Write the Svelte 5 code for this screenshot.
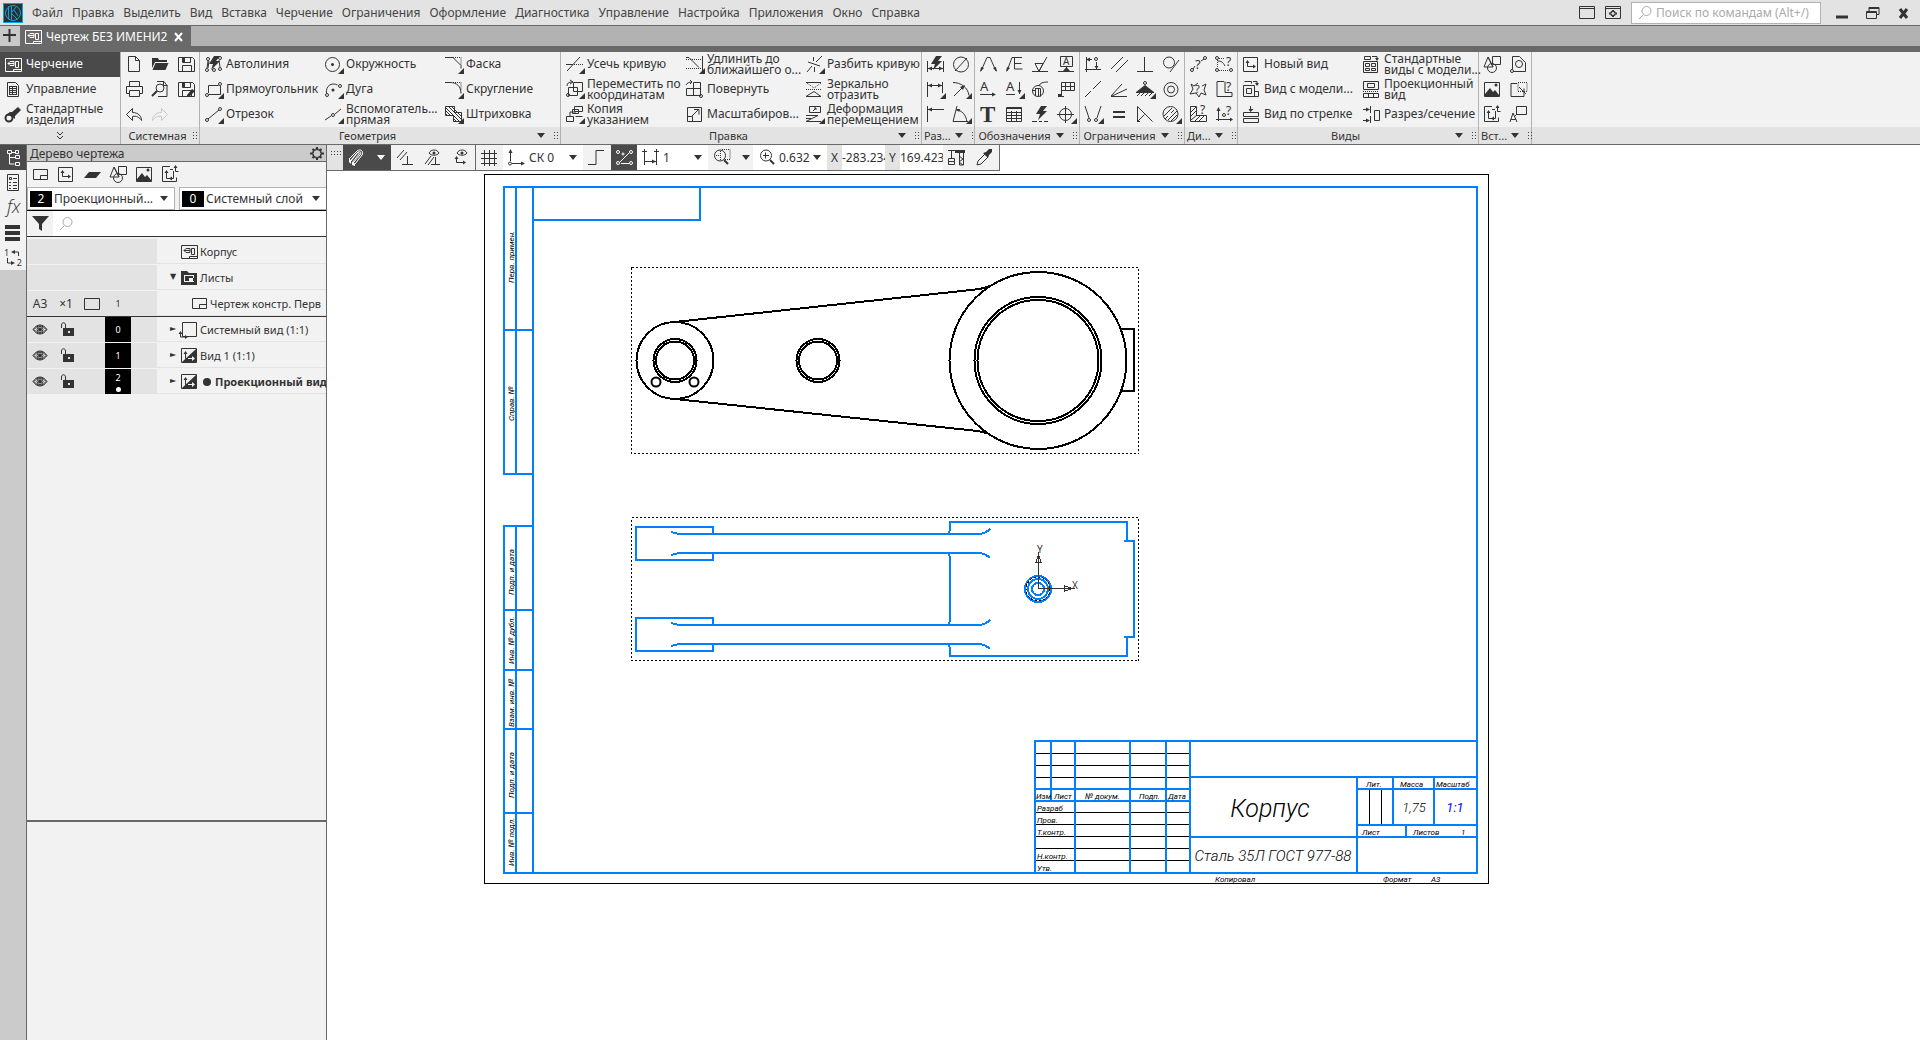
<script lang="ts">
  type Icon = {
    s?: string; // stroked
    f?: string; // filled
    d?: string; // dotted
    b?: string; // bold stroke
    t?: [number, number, number, string, string?];
    menu?: boolean;
  };

  const o = (x: number, y: number, r: number) =>
    `M${x - r} ${y}a${r} ${r} 0 1 0 ${2 * r} 0a${r} ${r} 0 1 0 ${-2 * r} 0`;

  const bolt = "M14 4h6l-4 5h4l-9 9 2-6h-4z";
  const save = "M5.5 5.5h14l2 2v12h-16zM9.5 5.5v5h8v-5M9.5 19.5v-6h9v6";

  const icons: Record<string, Icon> = {
    draft: {
      s: "M5.5 6.5h16v13h-16zM8 11.5l2-2h4v4h-4zM8 11.5h6M15.5 9.5h3v6h-3zM13.5 19.5v-2h8",
    },
    manage: { s: "M7.5 5.5h8l3 3v11h-11zM9.5 9.5h7M9.5 11.5h7M9.5 13.5h7M9.5 15.5h7M9.5 17.5h7M9.5 9v9M12.5 9v9M16.5 9v9" },
    screw: { b: o(9, 16, 3.5), f: "M6 13l4-3 2 0 6-5 3 3-6 6 0 3-4-3z" },
    file: { s: "M7.5 4.5h7l4 4v11h-11zM14.5 4.5v4h4" },
    folder: { f: "M5 6h6l1 2h8v2h-12l-3 6zM8.5 11h13l-3 7h-13z" },
    save: { s: save, f: "M9 5h3v5h-3z" },
    saveas: { s: save, f: "M9 5h3v5h-3zM14 18l5-6 3 2-5 5-3 1z" },
    print: { s: "M8.5 9v-4.5h10v4.5M8.5 16.5h-3v-7h16v7h-3M8.5 13.5h10v6h-10z" },
    preview: { s: "M10 4.5h7l3 4v11h-9M16.5 4.5v4h4" + o(13, 11, 4), b: "M10 14l-5 5" },
    undo: { s: "M11.5 6.5l-6 6 6 6v-4c4-1 7 1 9 4 0-4-3-8-9-8z" },
    redo: { s: "M14.5 6.5l6 6-6 6v-4c-4-1-7 1-9 4 0-4 3-8 9-8z" },
    autoline: {
      s: o(7, 18, 1.5) + o(8, 7, 1.5) + o(14, 18, 1.5) + o(20, 17, 1.5) + o(20, 6, 1.5) + "M8 9l-1 7M9 9l-1 7M19 8l1 7",
      f: bolt,
    },
    circle: { s: o(12.5, 12.5, 7), f: o(12.5, 12.5, 1.5), menu: true },
    rect: { s: "M8.5 16v-7.5h10M20.5 9v8.5h-12" + o(20, 7, 1.5) + o(7, 18, 1.5), menu: true },
    arc: { s: "M6.5 16c-1-7 5-11 11-8" + o(7, 18, 1.5) + o(20, 9, 1.5), f: o(13, 13, 1.5), menu: true },
    segment: { s: "M8 17L19 8" + o(7, 18, 1.5) + o(20, 7, 1.5), menu: true },
    auxline: { s: "M5 18l6-4M15 12l6-5" + o(13, 13, 1.5), menu: true },
    chamfer: { s: "M5 5.5h8l8 8v3", d: "M13 5.5h8v8", menu: true },
    fillet: { s: "M5 5.5h5c7 0 11 4 11 11", d: "M13 5.5h8v8", menu: true },
    hatch: {
      s: "M5.5 4.5h9v6h7v9h-8v-6h-8zM5 5l14 14M9 5l12 12M12 5l9 9M5 8l5 5M14 17l2 2M5 11l2 2M15 11l6 6",
      menu: true,
    },
    trim: { s: "M6 19L19 5M5 12.5h7", d: "M13 12.5h9", menu: true },
    extend: { s: "M5 5.5h3l10 10M21.5 4v15", d: "M5 7.5h16M5 16.5h16", menu: true },
    split: { s: "M6 20l5-6M15 10l6-6M7 10l12 4M12.5 5v4M13.5 15v5", menu: true },
    move: { s: "M12.5 5.5h9v9h-9zM7.5 10.5h9v8h-9zM6 9c0-3 2-4 5-4M9 3l3 2-3 2" + o(7, 18, 1.5), menu: true },
    rotate: { s: "M12.5 5.5h7v13M12.5 5.5v13M5.5 11.5h14v7h-14zM5 8c1-2 3-3 6-3M9 3l2 2-2 2" + o(20, 19, 1.5) },
    copy: { s: "M13.5 4.5h8v5h-8zM11.5 7.5h6v4h-6zM5.5 14.5h7v5h-7zM14.5 14.5h7M9 14v-4h6", menu: true },
    scale: { s: "M6.5 5.5h14v14h-14zM6.5 14.5h5v5M11 14l6-6M13 7.5h5v5" },
    mirror: { s: "M5 19.5h15l-7-5zM5 5.5h15", d: "M5 12.5h16M6 6l7 5 7-5" },
    deform: { s: "M8.5 4.5h11v6h-11zM5 13.5h12l-12 6h15M5 16.5h5M12 9l3-3M13 6h2v2", menu: true },
    dimauto: { s: "M5.5 9v11M21.5 9v11M5 16.5h16", f: bolt + "M6 16.5l4-2v4zM21 16.5l-4-2v4z" },
    diameter: { s: o(13, 12.5, 7.5) + "M7 19L19 6" },
    dimlinear: { s: "M5.5 5v15M20.5 5v11M6 8.5h14", f: "M6 8.5l4-2v4zM20 8.5l-4-2v4z", menu: true },
    radial: { s: "M5 5.5c8 0 15 5 16 13M6 19l9-9", f: "M17 8l-2 5-3-3z", menu: true },
    ordinate: { s: "M5.5 4v16M6 7.5h16", f: "M6 7.5l4-2v4z" },
    angle: { s: "M9 4l-4 15.5h15M8 8c6 0 10 5 11 12", f: "M8 7l4 0-1 3z", menu: true },
    leader: { s: "M6 19l6-13.5h3l6 13.5", f: "M5 20l1-5 3 1zM22 20l-4-4 3-1z" },
    leadere: { s: "M6 19l5-13.5h10M13.5 5v12h8M13.5 11.5h7", f: "M5 20l1-5 3 1z" },
    rough: { s: "M5 19.5h16M8 11.5h8l-4 8-4-8M12 19l8-14" },
    datum: { s: "M7.5 4.5h12v10h-12zM13.5 15v3M5 19.5h16", f: "M10 19l3.5-4 3.5 4z", t: [10, 13, 10, "A"] },
    aright: { s: "M5 17.5h15", f: "M21 17.5l-4-2v4z", t: [5, 14, 13, "A"] },
    adown: { s: "M5 17.5h9M18.5 5v12", f: "M18.5 17l-2-4h4z", t: [5, 14, 13, "A"], menu: true },
    remote: { s: o(11, 14, 5.5) + "M5 13.5h3M8.5 11.5h5v8M8.5 11v8M11.5 11v8M12 9c1-3 4-4 9-4" },
    flag: { s: "M8.5 20v-14.5h13v8h-13M12.5 5v8M17.5 5v8M5 19.5h6M8 9.5h13", f: "M5 20v-3h4v3z" },
    text: { t: [5, 20, 23, "T", "bold"] },
    table: { s: "M5.5 5.5h15v14h-15zM5 6.5h15M5 10.5h15M5 13.5h15M5 16.5h15M10.5 9v10M15.5 9v10" },
    boltline: { f: bolt, s: "M5 19.5h5M12 19.5h3M17 19.5h4" },
    target: { s: o(12.5, 12.5, 6) + "M4 12.5h17M12.5 4v17", menu: true },
    fixxy: { s: "M6.5 5v15M5 17.5h16M6 7.5h6M16.5 10v7" + o(16, 7, 1.5), f: "M6 7.5l4-2v4zM16.5 17l-2-3h4z" },
    parallel: { s: "M5 17L17 5M10 20L22 8" },
    perp: { s: "M12.5 5v14M5 19.5h16" },
    tangent: { s: o(11, 10.5, 5.5) + "M12 20L21 8" },
    collinear: { s: "M5 20l6-6M13 12l8-8" },
    rays: { s: "M21 19.5h-16L21 12M5 19L16 7" },
    ground: { s: o(13, 6, 1.5) + "M5 19l3-3M9 19l3-3M13 19l3-3M17 19l3-3", f: "M13 8l9 7v1h-18v-1z", menu: true },
    concentric: { s: o(13, 12.5, 7) + o(13, 12.5, 3.5) },
    symmetric: { s: "M5 4l4 12M21 4l-4 12" + o(9, 18, 1.5) + o(16, 18, 1.5), menu: true },
    equal: { b: "M7 10h12M7 15h12" },
    bisect: { s: "M5.5 19.5v-15l15 15M5.5 19.5l7-7M5 19.5h3" },
    hatchc: { s: o(12.5, 12, 7.5) + "M6 14l8-8M7 17l3-3M13 11l3-3M10 18l9-9M13 19l6-6", menu: true },
    qpoint: { s: "M8 17l2-3M16 9l3-2" + o(7, 18, 1.5) + o(20, 6, 1.5), t: [10, 17, 13, "?"] },
    qangle: {
      s: "M14 14c-2-4-4-5-7-5" + o(6, 6, 1.5) + o(6, 18, 1.5) + o(20, 18, 1.5),
      d: "M8 6.5h5M6.5 8v8M8 18.5h10",
      t: [15, 14, 12, "?"],
    },
    qarea: { s: "M6 7l3 2 4-3M6 7l2 5-3 5 6-1 3 4 2-4 5 2-2-5 2-6-4 2", t: [10, 16, 11, "?"] },
    qcontour: { s: "M13 4.5h-7v15h15v-4h-7v-11", t: [15, 14, 12, "?"] },
    qmass: { s: "M11.5 4.5h-6v15h16v-6h-10zM6 10l5-5M6 14l5-5M6 18l6-5M10 19l5-5M14 19l5-5", t: [15, 12, 12, "?"] },
    qaxis: { s: "M7.5 19v-13M5 17.5h16" + o(13, 13, 1.5), f: "M7.5 5l-2 4h4zM22 17.5l-3-2v4z", t: [15, 13, 12, "?"] },
    newview: { s: "M5.5 5.5h14v14h-14zM9.5 9v5.5h6", f: "M9.5 8l-2 3h4zM18 14.5l-3-2v4z" },
    modelview: {
      s: "M5.5 8.5h11v11h-11zM8.5 11.5h5v5h-5zM6.5 4.5h7v2M15 4.5h4v3M16.5 14.5h4v5h-7",
      f: "M19 9l-2-3h4z",
    },
    arrowview: { s: "M5.5 10.5h15v4h-15zM5.5 16.5h15v4h-15zM12.5 4v5", f: "M12.5 10l-2-3h5z" },
    stdviews: {
      s: "M5.5 9.5h14v11h-14zM7.5 11.5h4v3h-4zM13.5 11.5h4v3h-4zM7.5 16.5h4v2h-4zM13.5 16.5h4v2h-4zM6.5 4.5h6v3h-6zM14 4.5h5v3",
      f: "M19 9l-2-3h4z",
    },
    projview: { s: "M5.5 4.5h15v8h-15zM9.5 6.5h7v4h-7zM5.5 16.5h15v4h-15zM10.5 16.5v4M15.5 16.5v4", d: "M5 14.5h16" },
    section: { s: "M12.5 4v7M12.5 14v7M5 7.5h4M5 18.5h4M16.5 8.5h5v10h-5z", f: "M12 7.5l-4-2v4zM12 18.5l-4-2v4z" },
    shapes: { s: "M13.5 4.5h8v8h-8zM9 5l-4 10h9zM9 5l5 10" + o(13, 16, 4.5) },
    picture: { s: "M5.5 5.5h15v14h-15z", f: "M6 19v-2l5-6 3 4 2-2 4 5v1z" + o(17, 8, 1.5) },
    refresh: {
      s: "M13 4.5h-7.5v15h14v-4M9.5 10v6.5h4M13 7.5h3M18.5 5v4.5h3M16.5 9v7.5h-3",
      f: "M9.5 8l-2 3h4zM18.5 3l-2 3h4zM12 16.5l3-2v4z",
    },
    fragment: { s: "M7.5 17v-12.5h7l6 6v9h-12" + o(14, 12, 3.5) + o(7, 19, 1.5) },
    fragout: { s: "M12 6.5h-6v13h13v-8M14 10l7 7", d: "M13 5.5h9v9h-9z" },
    callout: { s: "M11.5 4.5h10v8h-10zM12 12l-3 3M5 20l3-9 4 9M6 17.5h5" },
    sheet: { s: "M6.5 7.5h14v10h-14zM13.5 17.5v-4h7" },
    layer: { f: "M5 16l5-6h12l-5 6z" },
    tree: { s: "M7.5 5.5h4v3h-4zM9.5 9v10h5M10 12.5h5M15.5 10.5h4v3h-4zM15.5 17.5h4v3h-4zM12 7.5h4M15.5 5.5h3v3h-3z" },
    props: { s: "M7.5 4.5h11v16h-11zM9.5 7.5h2v2h-2zM13 8.5h4M9 12.5h2M13 12.5h4M9 15.5h2M13 15.5h4M9 18.5h2M13 18.5h4" },
    fx: { t: [7, 18, 18, "fx", "italic"] },
    lines: { f: "M5 5h15v4h-15zM5 11h15v4h-15zM5 17h15v4h-15z" },
    renumber: { s: "M18.5 11v-4h-5M7.5 13v5h5", f: "M11 7l4-2v4zM15 18l-4-2v4z", t: [4, 11, 9, "1"] },
    frame: { s: "M6.5 5.5h14v14h-14zM4.5 16v4h5", f: "M4.5 14l-2 3h4zM12 20l-3-2v4z" },
    viewfill: {
      s: "M5.5 5.5h15v14h-15zM9.5 10v5.5h2",
      f: "M20 6v13h-14zM9.5 8l-2 3h4zM12 15h4v-2l3 2.5-3 2.5v-2h-4z",
    },
    folderfill: { f: "M5 6h6l2 2h8v12h-16zM8 10v7h10v-7zM9 11h8v5h-8zM13 16v-3h5v3z" },
    gear: {
      s: o(13, 12.5, 4.5) + o(13, 12.5, 4),
      b: "M13 6v2M13 17v2M6 12.5h2M18 12.5h2M8.5 8l1.5 1.5M16 15.5l1.5 1.5M8.5 17l1.5-1.5M16 9.5l1.5-1.5",
    },
    funnel: { f: "M5 5h17l-7 8v7l-3-2v-5z" },
    search: { s: o(14.5, 11, 4.5) + "M11 15l-4 4" },
    eye: {
      s: "M6 12.5c4-6 10-6 14 0-4 6-10 6-14 0zM7 12.5c4-5 8-5 12 0-4 5-8 5-12 0z" + o(13, 12.5, 3),
      f: o(13, 12.5, 2),
    },
    lock: { s: "M8.5 11v-3c0-3 4-3 4 0v3", f: "M10 11h11v8h-11zM15 14v2h2v-2z" },
    clip: {
      s: "M6 14l8-8c4-3 7 1 5 4l-7 9-3-1 7-9c1-2-1-2-2-1l-6 8zM8 15l7-8c2-1 4 0 2 3l-7 8",
      f: "M6 14l2 2v3l-2-2zM9 18l3 1v2l-3-1z",
    },
    snap: { s: "M6 13l7-8M9 15l7-8M16.5 11v9M11 19.5h11" },
    snapeye: { s: "M10 8c2-4 8-4 10 0-2 3-8 3-10 0zM6 19l6-8M9 20l6-8M16.5 12v7M12 19.5h9", f: o(15, 8, 1.5) },
    axiseye: {
      s: "M10 8c2-4 8-4 10 0-2 3-8 3-10 0zM9.5 12v5.5h8",
      f: o(15, 8, 1.5) + "M19 17.5l-3-2v4zM9.5 11l-2 3h4z",
    },
    grid: { s: "M5 8.5h16M5 13.5h16M5 18.5h16M8.5 5v16M13.5 5v16M18.5 5v16" },
    axes: { s: "M7.5 16v-11M9 18.5h12" + o(7, 18.5, 1.5), f: "M7.5 4l-2 4h4zM22 18.5l-4-2v4z" },
    ortho: { s: "M5 19.5h8v-14h8" },
    points: { s: "M9 17l9-9M10 18.5h8" + o(7, 7, 1.5) + o(20, 7, 1.5) + o(7, 18, 1.5) + o(20, 18, 1.5) + o(12, 9, 1) },
    step: { s: "M7.5 9v11M19.5 9v11M8 16.5h11M5 6.5h5M7.5 4v5M17 6.5h5M19.5 4v5", f: "M19 16.5l-4-2v4z" },
    zoomarea: { s: o(12, 10.5, 5.5), b: "M16 15l4 4", d: "M14 4.5h8v10h-5M8 10.5h6M12.5 6v9" },
    zoomin: { s: o(13, 10.5, 5.5) + "M10 10.5h6M12.5 7.5v6", b: "M17 15l4 4" },
    crane: {
      s: "M5 5.5h17M8.5 6v7M5.5 13.5h6v6h-6zM5 16.5h6M16.5 8v12h4v-12M16 11l4 3-4 3 4 3",
      f: "M12 5h10v3h-10z",
    },
    pipette: { s: "M6 20l1-4 7-7 3 3-7 7z", f: "M12 8l3-1 3-3 3 0 0 3-3 3-1 3z" },
    window: { s: "M5.5 6.5h15v12h-15zM5 8.5h15" },
    windowgear: {
      s: "M5.5 6.5h15v12h-15zM5 8.5h15" + o(13, 13.5, 2) + o(13, 13.5, 2.5),
      b: "M13 10v1M13 16v1M9 13.5h1M16 13.5h1",
    },
  };

  const menus = [
    "Файл", "Правка", "Выделить", "Вид", "Вставка", "Черчение", "Ограничения", "Оформление",
    "Диагностика", "Управление", "Настройка", "Приложения", "Окно", "Справка",
  ];

  const modes = [
    ["draft", "Черчение"],
    ["manage", "Управление"],
    ["screw", "Стандартные изделия"],
  ];

  // Commands run column by column, three to a column
  const groups = [
    {
      title: "Системная", width: 79, arrow: false,
      small: ["file", "print", "undo", "folder", "preview", "redo", "save", "saveas"],
    },
    {
      title: "Геометрия", width: 361, arrow: true,
      items: [
        ["autoline", "Автолиния"], ["rect", "Прямоугольник"], ["segment", "Отрезок"],
        ["circle", "Окружность"], ["arc", "Дуга"], ["auxline", "Вспомогатель...\nпрямая"],
        ["chamfer", "Фаска"], ["fillet", "Скругление"], ["hatch", "Штриховка"],
      ],
    },
    {
      title: "Правка", width: 361, arrow: true,
      items: [
        ["trim", "Усечь кривую"], ["move", "Переместить по\nкоординатам"], ["copy", "Копия\nуказанием"],
        ["extend", "Удлинить до\nближайшего о..."], ["rotate", "Повернуть"], ["scale", "Масштабиров..."],
        ["split", "Разбить кривую"], ["mirror", "Зеркально\nотразить"], ["deform", "Деформация\nперемещением"],
      ],
    },
    {
      title: "Раз...", width: 53, arrow: true,
      small: ["dimauto", "dimlinear", "ordinate", "diameter", "radial", "angle"],
    },
    {
      title: "Обозначения", width: 105, arrow: true,
      small: [
        "leader", "aright", "text", "leadere", "adown", "table",
        "rough", "remote", "boltline", "datum", "flag", "target",
      ],
    },
    {
      title: "Ограничения", width: 105, arrow: true,
      small: [
        "fixxy", "collinear", "symmetric", "parallel", "rays", "equal",
        "perp", "ground", "bisect", "tangent", "concentric", "hatchc",
      ],
    },
    {
      title: "Ди...", width: 53, arrow: true,
      small: ["qpoint", "qarea", "qmass", "qangle", "qcontour", "qaxis"],
    },
    {
      title: "Виды", width: 241, arrow: true,
      items: [
        ["newview", "Новый вид"], ["modelview", "Вид с модели..."], ["arrowview", "Вид по стрелке"],
        ["stdviews", "Стандартные\nвиды с модели..."], ["projview", "Проекционный\nвид"], ["section", "Разрез/сечение"],
      ],
    },
    {
      title: "Вст...", width: 53, arrow: true,
      small: ["shapes", "picture", "refresh", "fragment", "fragout", "callout"],
    },
  ];

  const sidebar = ["tree", "props", "fx", "lines", "renumber"];
  const treeTools = ["sheet", "newview", "layer", "shapes", "picture", "refresh"];

  const views = [
    { number: "0", icon: "frame", name: "Системный вид (1:1)", current: false },
    { number: "1", icon: "viewfill", name: "Вид 1 (1:1)", current: false },
    { number: "2", icon: "viewfill", name: "Проекционный вид", current: true },
  ];

  let activeMode = $state(0);
  let query = $state("");
  let filter = $state("");

  // Title block and margin captions: x, y, text
  const captions: [number, number, string][] = [
    [1036, 799, "Изм"], [1054, 799, "Лист"], [1085, 799, "№ докум."], [1139, 799, "Подп."], [1168, 799, "Дата"],
    [1037, 811, "Разраб"], [1037, 823, "Пров."], [1037, 835, "Т.контр."], [1037, 859, "Н.контр."], [1037, 871, "Утв."],
    [1366, 787, "Лит."], [1400, 787, "Масса"], [1436, 787, "Масштаб"],
    [1362, 835, "Лист"], [1413, 835, "Листов"], [1461, 835, "1"],
    [1215, 882, "Копировал"], [1383, 882, "Формат"], [1431, 882, "А3"],
  ];
  const margin: [number, string][] = [
    [283, "Перв. примен."], [421, "Справ. №"], [595, "Подп. и дата"], [664, "Инв. № дубл."],
    [727, "Взам. инв. №"], [798, "Подп. и дата"], [866, "Инв. № подл."],
  ];
  const thinRows = [753.5, 765.5, 777.5, 812.5, 824.5, 836.5, 848.5, 860.5];
</script>

{#snippet icon(name: string)}
  {@const i = icons[name]}
  <svg class="icon" viewBox="0 0 26 25" aria-hidden="true">
    {#if i.s}<path d={i.s} />{/if}
    {#if i.d}<path d={i.d} stroke-dasharray="1 1" />{/if}
    {#if i.b}<path d={i.b} stroke-width="2" />{/if}
    {#if i.f}<path class="solid" d={i.f} />{/if}
    {#if i.t}
      <text x={i.t[0]} y={i.t[1]} font-size={i.t[2]} class={i.t[4]}>{i.t[3]}</text>
    {/if}
    {#if i.menu}<path class="solid" d="M24 16v6h-6z" />{/if}
  </svg>
{/snippet}

<div class="app">
  <header class="menubar">
    <svg class="logo" viewBox="0 0 20 20" aria-hidden="true">
      <rect x="0.5" y="0.5" width="19" height="19" />
      <circle cx="10" cy="10" r="7.5" />
      <path d="M5.5 3.5v13M8.5 3v14M8.5 9.5l5-6M8.5 10.5l6 6M11 7l4 6" />
    </svg>
    <nav>
      {#each menus as item}
        <button>{item}</button>
      {/each}
    </nav>
    <button class="cell" aria-label="Окно">{@render icon("window")}</button>
    <button class="cell" aria-label="Настройка окна">{@render icon("windowgear")}</button>
    <label class="command-search">
      {@render icon("search")}
      <input aria-label="Поиск по командам" placeholder="Поиск по командам (Alt+/)" bind:value={query} />
    </label>
    <div class="window-buttons">
      <button aria-label="Свернуть"><svg viewBox="0 0 16 16"><path d="M2 12h12" stroke-width="3" /></svg></button>
      <button aria-label="Восстановить">
        <svg viewBox="0 0 16 16"><path d="M1.5 6.5h10v7h-10zM4 6v-3.5h10v7h-2M1 7.5h10M4 3.5h10" /></svg>
      </button>
      <button aria-label="Закрыть"><svg viewBox="0 0 16 16"><path d="M4 4l7 9M11 4l-7 9" stroke-width="3" /></svg></button>
    </div>
  </header>

  <div class="tabs">
    <button class="add" aria-label="Новый документ">
      <svg viewBox="0 0 20 20"><path d="M3 9h13M9.5 3v13" stroke-width="2" /></svg>
    </button>
    <div class="tab">
      {@render icon("draft")}
      <span>Чертеж БЕЗ ИМЕНИ2</span>
      <button aria-label="Закрыть вкладку"><svg viewBox="0 0 10 10"><path d="M1 1l7 8M8 1l-7 8" stroke-width="2" /></svg></button>
    </div>
  </div>

  <div class="ribbon">
    <section class="group modes">
      <div class="commands">
        {#each modes as [name, title], n}
          <button class="command" class:active={activeMode === n} onclick={() => (activeMode = n)}>
            {@render icon(name)}<span>{title}</span>
          </button>
        {/each}
      </div>
      <footer><svg class="chevron" viewBox="0 0 10 10"><path d="M2 1l3 3 3-3M2 5l3 3 3-3" /></svg></footer>
    </section>
    {#each groups as group}
      <section class="group" style="width: {group.width}px">
        {#if group.items}
          <div class="commands">
            {#each group.items as [name, title]}
              <button class="command">{@render icon(name)}<span>{title}</span></button>
            {/each}
          </div>
        {:else}
          <div class="commands small">
            {#each group.small ?? [] as name}
              <button class="cell" class:disabled={name === "redo"} aria-label={name}>{@render icon(name)}</button>
            {/each}
          </div>
        {/if}
        <footer>
          <span>{group.title}</span>
          {#if group.arrow}<i class="arrow"></i>{/if}
          <i class="grip"></i>
        </footer>
      </section>
    {/each}
    <div class="group rest"><footer></footer></div>
  </div>

  <main>
    <aside class="sidebar">
      {#each sidebar as name, n}
        <button class="cell" class:active={n === 0} aria-label={name}>
          {@render icon(name)}
          {#if name === "renumber"}<small>2</small>{/if}
        </button>
      {/each}
    </aside>

    <aside class="tree">
      <h2>Дерево чертежа {@render icon("gear")}</h2>
      <div class="tree-tools">
        {#each treeTools as name}
          <button class="cell" aria-label={name}>{@render icon(name)}</button>
        {/each}
      </div>
      <div class="combos">
        <button class="combo"><b>2</b><span>Проекционный...</span><i class="arrow"></i></button>
        <button class="combo"><b>0</b><span>Системный слой</span><i class="arrow"></i></button>
      </div>
      <div class="filter">
        <button class="cell" aria-label="Фильтр">{@render icon("funnel")}</button>
        <label>{@render icon("search")}<input aria-label="Поиск в дереве" bind:value={filter} /></label>
      </div>
      <ul>
        <li>
          <div class="flags"></div>
          <div class="name"><i class="twist"></i>{@render icon("draft")}<span>Корпус</span></div>
        </li>
        <li>
          <div class="flags"></div>
          <div class="name"><i class="twist">▼</i>{@render icon("folderfill")}<span>Листы</span></div>
        </li>
        <li class="last">
          <div class="flags">
            <span>A3</span><span>×1</span>
            <svg class="icon" viewBox="0 0 26 25"><path d="M5.5 7.5h15v11h-15z" /></svg>
            <em>1</em>
          </div>
          <div class="name nested"><i class="twist"></i>{@render icon("sheet")}<span>Чертеж констр. Перв</span></div>
        </li>
        {#each views as view}
          <li>
            <div class="flags">
              {@render icon("eye")}{@render icon("lock")}<span></span>
              <em class="black" class:dot={view.current}>{view.number}</em>
            </div>
            <div class="name" class:current={view.current}>
              <i class="twist">►</i>{@render icon(view.icon)}<span>{view.name}</span>
            </div>
          </li>
        {/each}
      </ul>
      <div class="details"></div>
    </aside>

    <div class="workspace">
      <div class="toolbar">
        <i class="grip wide"></i>
        <button class="active drop" aria-label="Привязки">{@render icon("clip")}<i class="arrow"></i></button>
        <button class="cell wide" aria-label="Параллельность">{@render icon("snap")}</button>
        <button class="cell wide" aria-label="Показ ограничений">{@render icon("snapeye")}</button>
        <button class="cell wide" aria-label="Показ осей">{@render icon("axiseye")}</button>
        <button class="cell wide edge" aria-label="Сетка">{@render icon("grid")}</button>
        <button class="field cs">{@render icon("axes")}<span>СК 0</span><i class="arrow"></i></button>
        <button class="cell wide" aria-label="Ортогональность">{@render icon("ortho")}</button>
        <button class="cell active" aria-label="Округление">{@render icon("points")}</button>
        <button class="field step">{@render icon("step")}<span>1</span><i class="arrow"></i></button>
        <button class="drop area" aria-label="Масштаб рамкой">{@render icon("zoomarea")}<i class="arrow"></i></button>
        <div class="field zoom">
          {@render icon("zoomin")}<input aria-label="Масштаб" value="0.632" /><i class="arrow"></i>
        </div>
        <label class="coord"><span>X</span><input value="-283.234" /></label>
        <label class="coord"><span>Y</span><input value="169.423" /></label>
        <button class="cell wide" aria-label="Измерение">{@render icon("crane")}</button>
        <button class="cell wide" aria-label="Пипетка">{@render icon("pipette")}</button>
      </div>

      <svg class="drawing">
        <g transform="translate(-327 -171)">
          <rect class="thin" x="484.5" y="174.5" width="1004" height="709" />

          <!-- frame and margin columns -->
          <path
            class="blue"
            d="M504 187H1477V873H504M533 187V873M504 186V475M516 187V474M504 330H533M504 474H533
              M700 187V220H533M504 525V874M516 526V873M504 526H533M504 610H533M504 670H533M504 729H533M504 813H533"
          />
          {#each margin as [y, label]}
            <text class="tiny" transform="translate(514 {y}) rotate(-90)">{label}</text>
          {/each}

          <!-- title block -->
          {#each thinRows as y}
            <path class="thin" d="M1035 {y}H1190" />
          {/each}
          <path class="thin" d="M1369.5 790V825M1381.5 790V825" />
          <path
            class="blue"
            d="M1035 873V741H1477M1051 741V801M1075 741V873M1130 741V873M1166 741V873M1190 741V873
              M1035 789H1190M1035 801H1190M1190 777H1477M1357 777V873M1393 777V825M1434 777V825
              M1357 789H1477M1357 825H1477M1190 837H1477M1406 825V837"
          />
          {#each captions as [x, y, label]}
            <text class="tiny" {x} {y}>{label}</text>
          {/each}
          <text class="part" x="1270" y="817" text-anchor="middle">Корпус</text>
          <text class="steel" x="1273" y="861" text-anchor="middle">Сталь 35Л ГОСТ 977-88</text>
          <text class="value" x="1414" y="812" text-anchor="middle">1,75</text>
          <text class="value ratio" x="1455" y="812" text-anchor="middle">1:1</text>

          <!-- front view -->
          <path class="dashed" d="M631.5 267.5H1138.5V453.5H631.5z" />
          <g class="black-line">
            <circle cx="675" cy="360.5" r="38.5" />
            {#each [675, 818] as cx}
              <circle {cx} cy="360.5" r="21.5" />
              <circle {cx} cy="360.5" r="19" />
            {/each}
            <circle class="hole" cx="656" cy="382" r="4.5" />
            <circle class="hole" cx="694" cy="382" r="4.5" />
            <circle cx="1038" cy="360.5" r="88.5" />
            <circle cx="1038" cy="360.5" r="63.5" />
            <circle cx="1038" cy="360.5" r="60.5" />
            <path d="M675 322L980 289L990 286M675 399L978 431L990 434M1121 329H1134V391H1121" />
          </g>

          <!-- projected view -->
          <path class="dashed" d="M631.5 517.5H1138.5V660.5H631.5z" />
          <path
            class="blue"
            d="M713 534V527H636V560H713V553M671 532L679 534H980Q986 533 990 529M671 555L679 553H980Q986 554 990 558
              M713 625V618H636V651H713V644M671 623L679 625H980Q986 624 990 620M671 646L679 644H980Q986 645 990 649
              M948 534Q950 532 950 528V522H1127V541M948 553Q950 555 950 559V619Q950 623 948 625
              M948 644Q950 646 950 650V656H1127V637M1124 541H1134V637H1124"
          />
          <g class="blue">
            <circle cx="1038" cy="589" r="13" />
            <circle cx="1038" cy="589" r="10" />
            <circle cx="1038" cy="589" r="6" />
          </g>
          <circle class="dashed" cx="1038" cy="589" r="12" />
          <path class="axis" d="M1038.5 553V588.5H1074M1036 562.5H1041L1038.5 554zM1064.5 586V591L1073 588.5z" />
          <text class="axis-label" x="1037" y="553">Y</text>
          <text class="axis-label" x="1072" y="589">X</text>
        </g>
      </svg>
    </div>
  </main>
</div>

<style>
  :global(body) {
    margin: 0;
  }

  .app {
    display: flex;
    flex-direction: column;
    height: 100vh;
    overflow: hidden;
    background: #fff;
    color: #333;
    font: 12px/11px "Noto Sans", "Open Sans", sans-serif;
  }

  .app * {
    box-sizing: border-box;
  }

  button,
  input {
    padding: 0;
    border: 0;
    border-radius: 0;
    background: none;
    color: inherit;
    font: inherit;
  }

  input {
    min-width: 0;
    outline: none;
  }

  svg {
    display: block;
    flex: none;
    fill: none;
    stroke: currentColor;
  }

  .icon {
    width: 26px;
    height: 25px;
  }

  .solid {
    fill: currentColor;
    fill-rule: evenodd;
    stroke: none;
  }

  text {
    fill: currentColor;
    stroke: none;
  }

  .bold {
    font-family: "Liberation Serif", serif;
    font-weight: bold;
  }

  .italic {
    font-family: "Open Sans", sans-serif;
    font-style: italic;
    font-weight: 300;
  }

  .cell {
    display: block;
    width: 26px;
    height: 25px;
  }

  .arrow {
    flex: none;
    width: 0;
    height: 0;
    border: 4px solid transparent;
    border-top: 5px solid #333;
    border-bottom: 0;
  }

  .grip {
    flex: none;
    width: 5px;
    height: 10px;
    background: radial-gradient(circle, #444 1px, transparent 1px) 0 0 / 3px 3px;
  }

  /* menu bar */
  .menubar {
    display: flex;
    align-items: center;
    height: 26px;
    flex: none;
    background: #e3e3e3;
    border-bottom: 1px solid #696969;
  }

  .logo {
    width: 20px;
    height: 20px;
    margin: 0 3px;
    color: #00a8e8;
  }

  .logo rect {
    fill: #2e2e33;
  }

  nav {
    display: flex;
    flex: 1;
    gap: 9px;
    padding-left: 6px;
  }

  nav button {
    height: 24px;
    color: #444;
  }

  .command-search {
    display: flex;
    align-items: center;
    width: 190px;
    height: 22px;
    margin-left: 5px;
    background: #fff;
    border: 1px solid #b2b2b2;
    color: #aaa;
  }

  .command-search .icon,
  .filter label .icon {
    margin-right: -2px;
    color: #aaa;
  }

  .command-search input {
    flex: 1;
  }

  input::placeholder {
    color: #aaa;
    opacity: 1;
  }

  .window-buttons {
    display: flex;
    gap: 15px;
    margin: 0 8px 0 13px;
  }

  .window-buttons svg {
    width: 16px;
    height: 16px;
  }

  /* document tabs */
  .tabs {
    display: flex;
    height: 26px;
    flex: none;
    background: #b2b2b2;
    border-bottom: 6px solid #696969;
  }

  .add {
    width: 20px;
    background: #c9c9c9;
  }

  .add svg {
    width: 20px;
    height: 20px;
  }

  .tab {
    display: flex;
    align-items: center;
    height: 21px;
    padding-right: 7px;
    background: #696969;
    color: #fff;
  }

  .tab button {
    margin-left: 6px;
  }

  .tab button svg {
    width: 10px;
    height: 10px;
  }

  /* ribbon */
  .ribbon {
    display: flex;
    flex: none;
    border-bottom: 1px solid #696969;
    background: #f2f2f2;
  }

  .group {
    display: flex;
    flex-direction: column;
    flex: none;
    border-right: 1px solid #b2b2b2;
  }

  .modes {
    width: 121px;
  }

  .rest {
    flex: 1;
    justify-content: flex-end;
    border-right: 0;
  }

  .commands {
    display: grid;
    grid-template-rows: repeat(3, 25px);
    grid-auto-columns: 120px;
    grid-auto-flow: column;
  }

  .small {
    grid-auto-columns: 26px;
  }

  .command {
    display: flex;
    align-items: center;
    text-align: left;
    white-space: pre;
  }

  .command span {
    padding-bottom: 2px;
  }

  .modes .command {
    white-space: normal;
  }

  .active {
    background: #4a4a4a;
    color: #fff;
  }

  .disabled {
    color: #c9c9c9;
  }

  .group footer {
    display: flex;
    align-items: center;
    height: 17px;
    padding: 0 2px;
    background: #e3e3e3;
    font-size: 11px;
  }

  .group footer span {
    flex: 1;
    text-align: center;
    white-space: nowrap;
  }

  .group footer .arrow {
    margin: 0 8px 0 4px;
  }

  .chevron {
    width: 10px;
    height: 10px;
    margin: auto;
  }

  /* panels */
  main {
    display: flex;
    flex: 1;
    min-height: 0;
  }

  .sidebar {
    flex: none;
    width: 27px;
    background: #cbcbcb;
    border-right: 1px solid #696969;
  }

  .sidebar .cell {
    position: relative;
    background: #f2f2f2;
  }

  .sidebar .active {
    background: #4a4a4a;
  }

  .sidebar small {
    position: absolute;
    right: 4px;
    bottom: 2px;
    font-size: 9px;
  }

  .tree {
    display: flex;
    flex-direction: column;
    flex: none;
    width: 300px;
    overflow: hidden;
    background: #f2f2f2;
    border-right: 1px solid #696969;
  }

  h2 {
    display: flex;
    align-items: center;
    justify-content: space-between;
    height: 17px;
    flex: none;
    margin: 0;
    padding-left: 3px;
    background: #cbcbcb;
    border-bottom: 1px solid #696969;
    font-size: 12px;
    font-weight: 400;
  }

  h2 .icon {
    margin-right: -4px;
  }

  .tree-tools {
    display: flex;
    flex: none;
  }

  .combos {
    display: flex;
    flex: none;
    gap: 4px;
    height: 24px;
    border-bottom: 1px solid #000;
  }

  .combo {
    display: flex;
    align-items: center;
    flex: none;
    width: 148px;
    height: 23px;
    padding: 0 6px 0 2px;
    background: #fff;
    border: 1px solid #b2b2b2;
  }

  .combo b {
    width: 22px;
    margin-right: 2px;
    background: #000;
    color: #fff;
    font-weight: 400;
    line-height: 16px;
  }

  .combo span {
    flex: 1;
    text-align: left;
    white-space: nowrap;
  }

  .filter {
    display: flex;
    flex: none;
    margin-bottom: 2px;
    border-bottom: 1px solid #333;
  }

  .filter label {
    display: flex;
    flex: 1;
    background: #fff;
  }

  ul {
    flex: 1;
    margin: 0;
    padding: 0;
    list-style: none;
  }

  li {
    display: flex;
    height: 26px;
    border-bottom: 1px solid #f2f2f2;
  }

  li.last {
    border-bottom-color: #333;
  }

  .flags {
    display: flex;
    align-items: center;
    flex: none;
    width: 130px;
    background: #e3e3e3;
  }

  .flags > * {
    width: 26px;
    text-align: center;
  }

  .flags em {
    font-size: 9px;
    font-style: normal;
    line-height: 25px;
  }

  .flags .black {
    height: 25px;
    background: #000;
    color: #fff;
  }

  .flags .dot {
    display: flex;
    flex-direction: column;
    align-items: center;
    line-height: 18px;
  }

  .dot::after {
    content: "";
    width: 5px;
    height: 5px;
    border-radius: 50%;
    background: #fff;
  }

  .name {
    display: flex;
    align-items: center;
    flex: 1;
    min-width: 0;
    padding-left: 11px;
    font-size: 11px;
    white-space: nowrap;
    border-bottom: 1px solid #e3e3e3;
  }

  .name .icon {
    margin: 0 -2px;
  }

  .nested {
    padding-left: 21px;
  }

  .current {
    font-weight: 700;
  }

  .current span::before {
    content: "";
    display: inline-block;
    width: 8px;
    height: 8px;
    margin: 0 4px 0 3px;
    border-radius: 50%;
    background: #333;
  }

  .twist {
    flex: none;
    width: 10px;
    font: 8px/10px "DejaVu Sans", sans-serif;
    text-align: center;
  }

  .details {
    height: 220px;
    flex: none;
    border-top: 2px solid #696969;
  }

  /* drawing area */
  .workspace {
    display: flex;
    flex-direction: column;
    flex: 1;
    min-width: 0;
  }

  .toolbar {
    display: flex;
    align-self: flex-start;
    height: 26px;
    background: #f2f2f2;
    border: solid #696969;
    border-width: 0 1px 1px 0;
  }

  .toolbar .wide {
    width: 28px;
  }

  .toolbar .grip {
    width: 16px;
    height: 25px;
    border: solid #e3e3e3;
    border-width: 5px 1px 13px 3px;
    background-color: #e3e3e3;
  }

  .toolbar .edge {
    border-left: 1px solid #696969;
  }

  .drop,
  .field {
    display: flex;
    align-items: center;
    width: 48px;
  }

  .drop .arrow {
    margin-left: 8px;
  }

  .area {
    width: 45px;
  }

  .active .arrow {
    border-top-color: #fff;
  }

  .field {
    background: #fff;
  }

  .field span {
    flex: 1;
    margin-right: auto;
    text-align: left;
  }

  .field .arrow {
    margin-right: 6px;
  }

  .cs {
    width: 80px;
  }

  .step {
    width: 71px;
  }

  .zoom {
    width: 74px;
  }

  .zoom input {
    flex: 1;
  }

  .coord {
    display: flex;
    align-items: center;
    background: #e3e3e3;
  }

  .coord span {
    width: 15px;
    text-align: center;
  }

  .coord input {
    width: 43px;
    height: 25px;
    background: #fff;
  }

  .drawing {
    flex: 1;
    width: 100%;
    min-height: 0;
    shape-rendering: crispEdges;
    font-family: Roboto, "Liberation Sans", sans-serif;
    font-style: italic;
    font-weight: 300;
  }

  .thin {
    stroke: #000;
  }

  .blue {
    stroke: #007fff;
    stroke-width: 2;
  }

  .black-line {
    stroke: #000;
    stroke-width: 2;
  }

  .hole {
    shape-rendering: geometricPrecision;
  }

  .dashed {
    stroke: #000;
    stroke-dasharray: 2 2;
  }

  .axis {
    stroke: #333;
  }

  .axis-label {
    font: 10px "Noto Sans", sans-serif;
  }

  .drawing .tiny {
    fill: #000;
    font-size: 8px;
    font-weight: 400;
  }

  .drawing .part {
    fill: #000;
    font-size: 25px;
  }

  .drawing .steel {
    fill: #000;
    font-size: 15px;
  }

  .drawing .value {
    fill: #000;
    font-size: 13px;
  }

  .drawing .ratio {
    fill: #00f;
    font-weight: 400;
  }
</style>
